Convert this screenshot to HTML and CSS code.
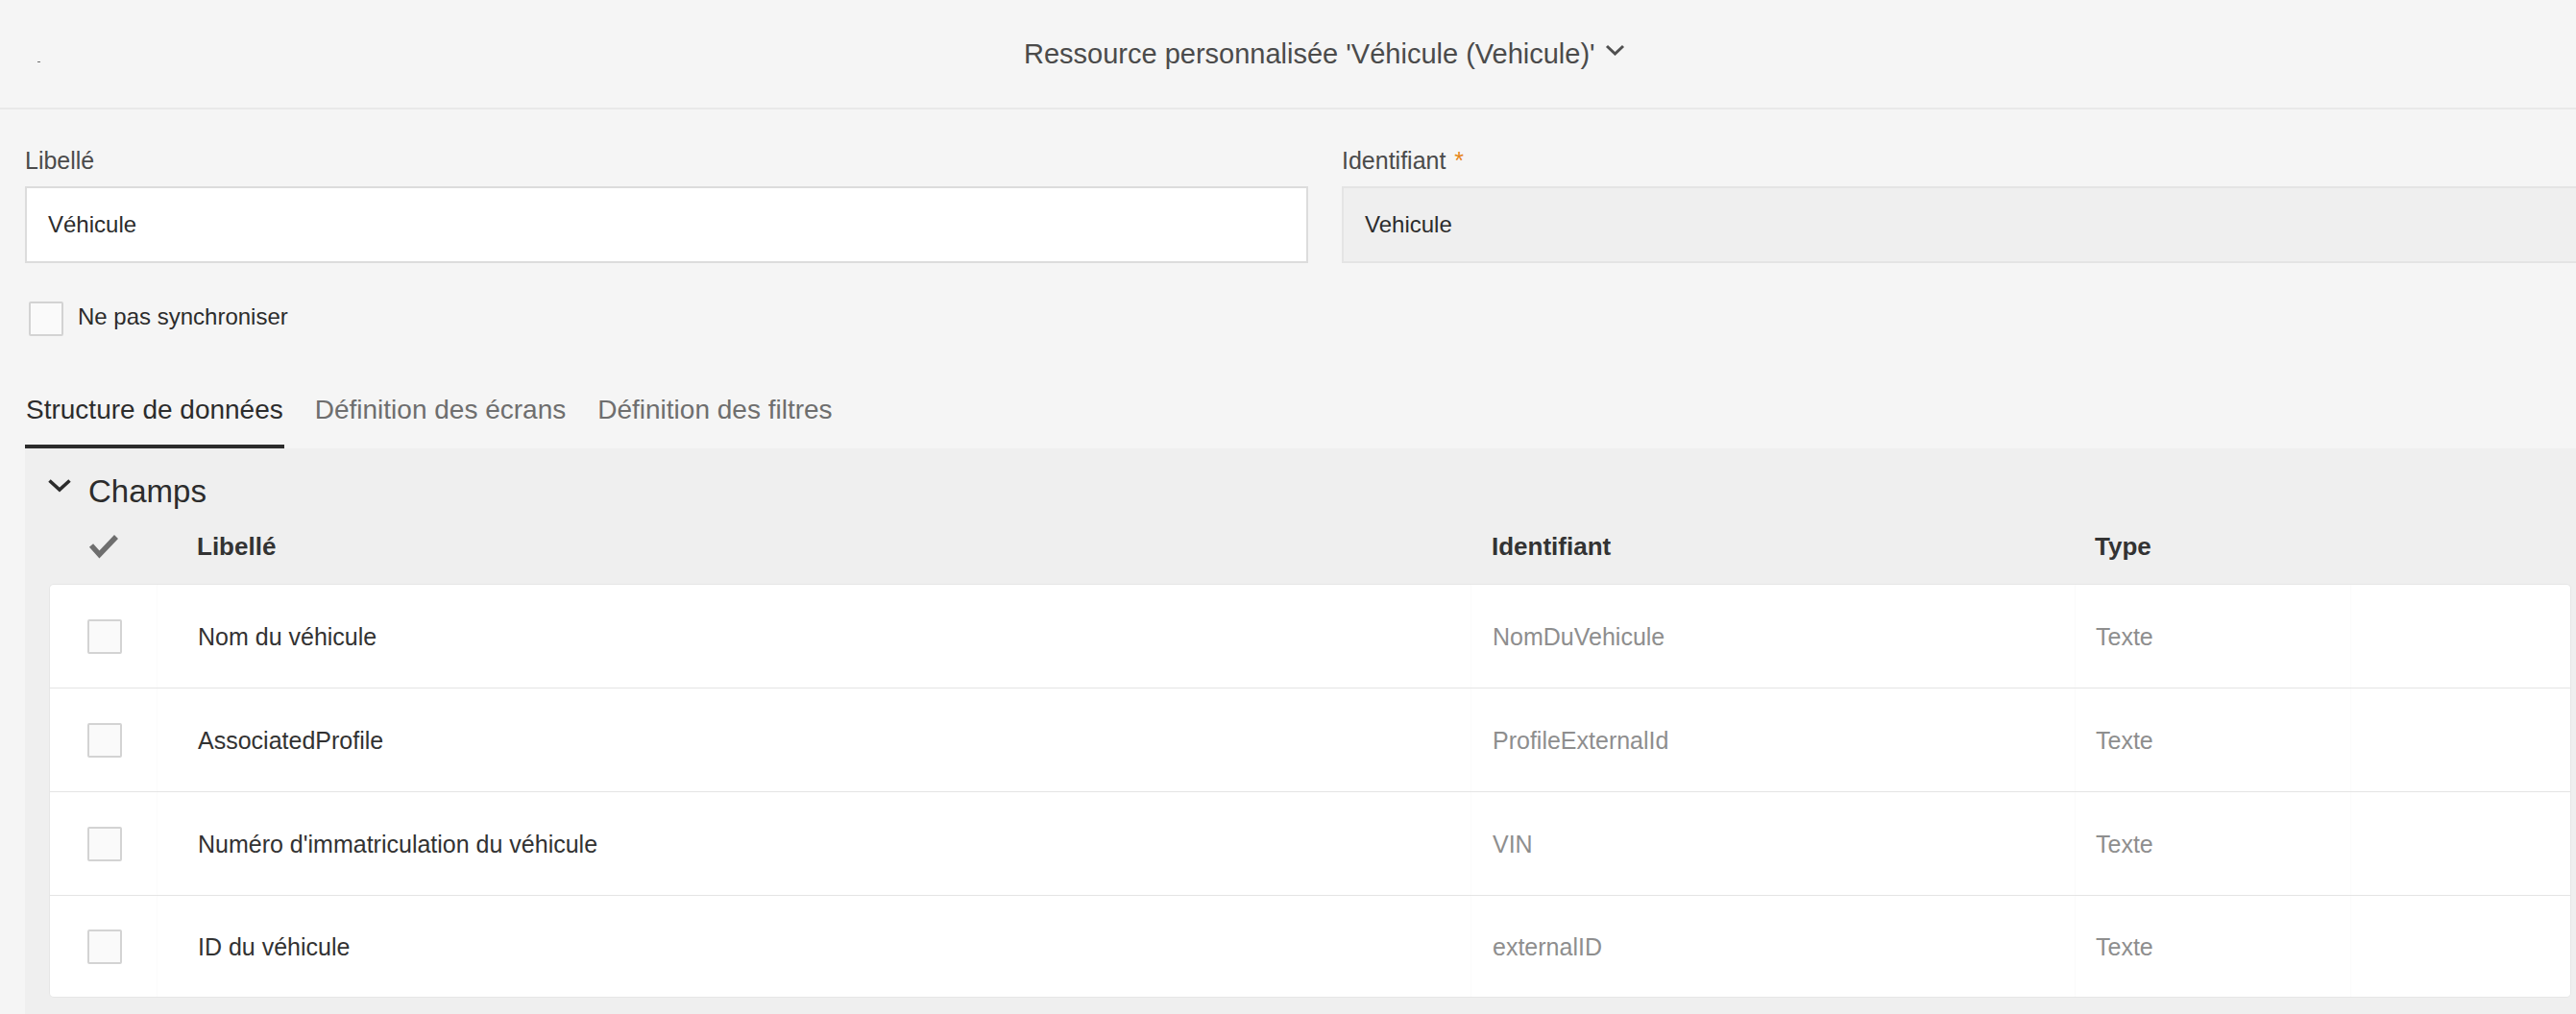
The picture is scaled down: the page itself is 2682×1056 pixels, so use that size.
FILE: index.html
```html
<!DOCTYPE html>
<html lang="fr">
<head>
<meta charset="utf-8">
<title>Ressource personnalisée 'Véhicule (Vehicule)'</title>
<link rel="stylesheet" href="styles.css">
</head>
<body>
<header class="topbar">
  <span class="dot"></span>
  <div class="title">
    <span class="title-text">Ressource personnalisée 'Véhicule (Vehicule)'</span>
    <svg class="title-chevron" width="21" height="12" viewBox="0 0 21 12"><polyline points="2,2 10.5,10 19,2" fill="none" stroke="#505050" stroke-width="3"/></svg>
  </div>
</header>
<main class="content">
  <div class="fields">
    <div class="field">
      <label class="field-label">Libellé</label>
      <div class="input">Véhicule</div>
    </div>
    <div class="field">
      <label class="field-label">Identifiant <span class="req">*</span></label>
      <div class="input input-readonly">Vehicule</div>
    </div>
  </div>
  <div class="check-row">
    <span class="checkbox"></span>
    <span class="check-label">Ne pas synchroniser</span>
  </div>
  <nav class="tabs">
    <span class="tab tab-active">Structure de données</span>
    <span class="tab">Définition des écrans</span>
    <span class="tab">Définition des filtres</span>
  </nav>
  <section class="panel">
    <div class="panel-head">
      <svg class="panel-chevron" width="26" height="15" viewBox="0 0 26 15"><polyline points="2.5,2.5 13,12 23.5,2.5" fill="none" stroke="#2c2c2c" stroke-width="3.6"/></svg>
      <span class="panel-title">Champs</span>
    </div>
    <div class="grid grid-head">
      <div class="c0 head-check"><svg width="32" height="26" viewBox="0 0 32 26"><polyline points="3,12 11.5,21.5 29,3" fill="none" stroke="#6e6e6e" stroke-width="5.5"/></svg></div>
      <div class="c1">Libellé</div>
      <div class="c2">Identifiant</div>
      <div class="c3">Type</div>
      <div class="c4"></div>
    </div>
    <div class="card">
      <div class="grid row">
        <div class="c0"><span class="checkbox"></span></div>
        <div class="c1">Nom du véhicule</div>
        <div class="c2 muted">NomDuVehicule</div>
        <div class="c3 muted">Texte</div>
        <div class="c4"></div>
      </div>
      <div class="grid row">
        <div class="c0"><span class="checkbox"></span></div>
        <div class="c1">AssociatedProfile</div>
        <div class="c2 muted">ProfileExternalId</div>
        <div class="c3 muted">Texte</div>
        <div class="c4"></div>
      </div>
      <div class="grid row">
        <div class="c0"><span class="checkbox"></span></div>
        <div class="c1">Numéro d'immatriculation du véhicule</div>
        <div class="c2 muted">VIN</div>
        <div class="c3 muted">Texte</div>
        <div class="c4"></div>
      </div>
      <div class="grid row">
        <div class="c0"><span class="checkbox"></span></div>
        <div class="c1">ID du véhicule</div>
        <div class="c2 muted">externalID</div>
        <div class="c3 muted">Texte</div>
        <div class="c4"></div>
      </div>
    </div>
  </section>
</main>
</body>
</html>
```
FILE: styles.css
```css
* { box-sizing: border-box; }

html, body {
  margin: 0;
  height: 100%;
}

body {
  background: #f5f5f5;
  font-family: "Liberation Sans", Arial, sans-serif;
  color: #2c2c2c;
  display: flex;
  flex-direction: column;
  overflow: hidden;
}

/* top bar */
.topbar {
  flex: 0 0 auto;
  height: 114px;
  border-bottom: 2px solid #e9e9e9;
  display: flex;
  align-items: center;
  padding-left: 39px;
}

.dot {
  align-self: flex-start;
  margin-top: 64px;
  width: 3px;
  height: 1px;
  background: #6e6e6e;
}

.title {
  margin-left: 1024px;
  display: flex;
  align-items: center;
  gap: 10px;
  font-size: 29px;
  line-height: 36px;
  color: #4b4b4b;
  white-space: nowrap;
}

.title-chevron {
  margin-bottom: 8px;
}

/* content */
.content {
  flex: 1 1 auto;
  display: flex;
  flex-direction: column;
  padding: 38px 0 0 26px;
  min-height: 0;
}

.fields {
  display: grid;
  grid-template-columns: 1336px 1336px;
  column-gap: 35px;
}

.field {
  display: flex;
  flex-direction: column;
}

.field-label {
  font-size: 25px;
  line-height: 30px;
  color: #4b4b4b;
  margin-bottom: 12px;
  white-space: nowrap;
}

.req {
  color: #e68619;
  margin-left: 2px;
}

.input {
  height: 80px;
  border: 2px solid #dcdcdc;
  background: #ffffff;
  display: flex;
  align-items: center;
  padding-left: 22px;
  font-size: 24px;
  color: #2c2c2c;
}

.input-readonly {
  background: #efefef;
  border-color: #e4e4e4;
}

.check-row {
  margin-top: 40px;
  margin-left: 4px;
  display: flex;
  align-items: flex-start;
  gap: 15px;
}

.checkbox {
  display: block;
  width: 36px;
  height: 36px;
  border: 2px solid #d3d3d3;
  border-radius: 2px;
  background: #fafafa;
  flex: 0 0 auto;
}

.check-label {
  font-size: 24px;
  line-height: 32px;
  color: #2c2c2c;
}

/* tabs */
.tabs {
  margin-top: 60px;
  display: flex;
  gap: 31px;
}

.tab {
  font-size: 28px;
  line-height: 34px;
  padding: 0 1px 19px;
  border-bottom: 4px solid transparent;
  color: #6e6e6e;
  white-space: nowrap;
}

.tab-active {
  color: #2c2c2c;
  border-bottom-color: #2c2c2c;
}

/* panel */
.panel {
  flex: 1 1 auto;
  background: #efefef;
  padding: 25px 6px 0 0;
}

.panel-head {
  display: flex;
  align-items: flex-start;
  gap: 17px;
  padding-left: 23px;
}

.panel-chevron {
  margin-top: 6px;
  flex: 0 0 auto;
}

.panel-title {
  font-size: 33px;
  line-height: 40px;
  color: #2c2c2c;
}

.grid {
  display: grid;
  grid-template-columns: 111px 1368px 629px 287px 1fr;
  align-items: center;
}

.grid-head {
  margin-left: 26px;
  padding: 22px 0 25px;
  font-size: 26px;
  line-height: 30px;
  font-weight: 700;
  color: #333333;
}

.c0 {
  display: flex;
  align-items: center;
  padding-left: 39px;
}

.head-check {
  padding-left: 40px;
}

.head-check svg { display: block; }

.c1 { padding-left: 42px; white-space: nowrap; }
.c2 { padding-left: 22px; white-space: nowrap; }
.c3 { padding-left: 21px; white-space: nowrap; }

.card {
  margin-left: 26px;
  background: #ffffff;
  border-radius: 4px;
  box-shadow: 0 0 0 1px #e6e6e6;
  overflow: hidden;
}

.row {
  height: 108px;
  border-bottom: 1px solid #e4e4e4;
  font-size: 25px;
  line-height: 30px;
  color: #323232;
  align-items: stretch;
}

.row:last-child {
  border-bottom: none;
  height: 105px;
}

.row > div {
  display: flex;
  align-items: center;
}

.row .c1, .row .c2, .row .c3, .row .c4 {
  border-left: 1px solid #fbfbfb;
}

.muted {
  color: #8e8e8e;
}
```
